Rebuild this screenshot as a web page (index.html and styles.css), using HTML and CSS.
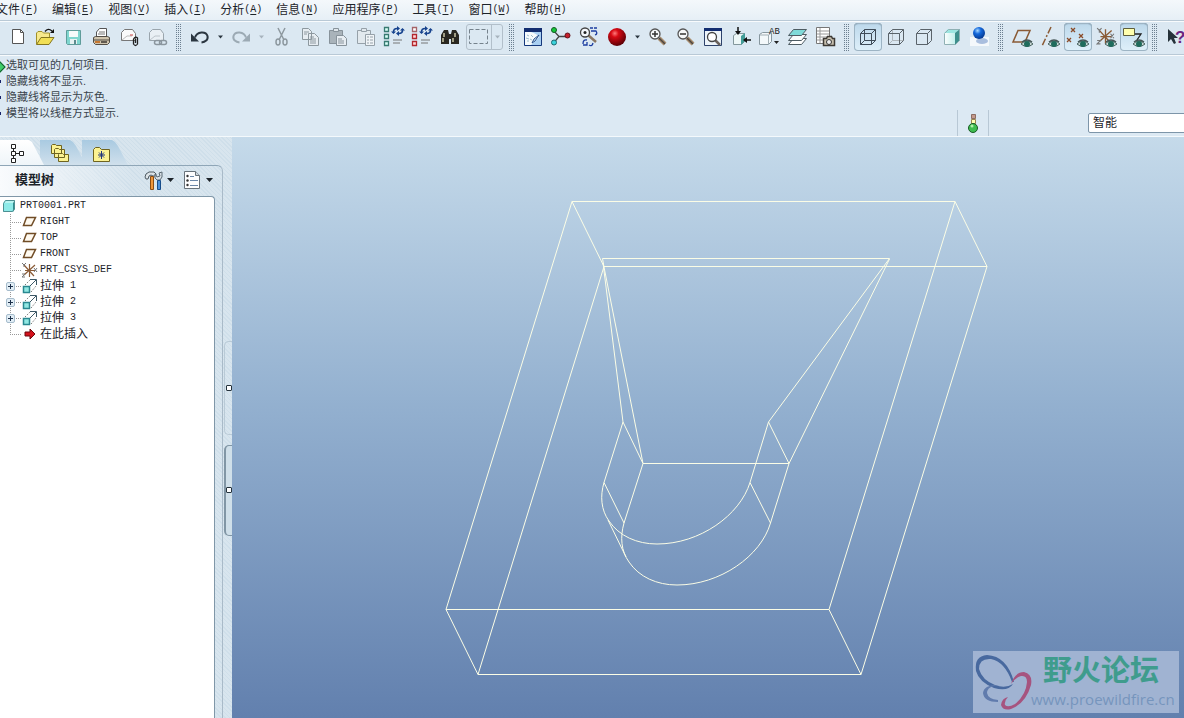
FILE: index.html
```html
<!DOCTYPE html>
<html lang="zh-CN">
<head>
<meta charset="utf-8">
<title>PRT0001</title>
<link rel="stylesheet" href="styles.css">
</head>
<body>
<svg class="defs" aria-hidden="true">
  <defs>
    <radialGradient id="red" cx=".38" cy=".3" r=".7"><stop offset="0" stop-color="#ff7a7a"/><stop offset=".3" stop-color="#d80a14"/><stop offset="1" stop-color="#5d0006"/></radialGradient>
    <radialGradient id="blue" cx=".38" cy=".3" r=".7"><stop offset="0" stop-color="#a8d8ff"/><stop offset=".4" stop-color="#1569dc"/><stop offset="1" stop-color="#063a92"/></radialGradient>
    <linearGradient id="teal" x1="0" x2="1"><stop offset="0" stop-color="#fff"/><stop offset="1" stop-color="#c4efec"/></linearGradient>
    <symbol id="caret" viewBox="0 0 7 4"><path d="M0 0h7L3.500 4z" fill="currentColor"/></symbol>
    <symbol id="eye" viewBox="0 0 12 9"><path d="M0 5Q6-1 12 5Q6 10 0 5z" fill="#c9d8d6" stroke="#4a6460"/><circle cx="6" cy="5" r="3" fill="#1f6b5c"/><path d="M1 3Q6-1 11 3" stroke="#455" stroke-width="1.500" fill="none"/></symbol>
    <symbol id="plane" viewBox="0 0 15 11"><path d="M4.500 1.500h9l-4 8h-8z" fill="#fffaf0" stroke="#704c26" stroke-width="1.500"/></symbol>
    <symbol id="csys" viewBox="0 0 17 16"><path d="M8.500 2v13M3 3l10 11M3 13L14 3M4 8.500h10" stroke="#8a5a35" stroke-width="1.200"/><path d="M1 1l2 2 2-2M3 3v2M13 6l3 4m0-4l-3 4M1 12h3l-3 3h3" stroke="#777" fill="none"/></symbol>
    <symbol id="extrude" viewBox="0 0 16 16"><path d="M1.500 8.500h6v6h-6z" fill="#92e8e3" stroke="#2a8890" stroke-width="1.500"/><path d="M3 7l6-6M9 14l5-6" stroke="#777" stroke-dasharray="1.500 1.500"/><path d="M8 1.500h6.500V7M8 8l6-6" fill="none" stroke="#3d5866"/></symbol>
    <symbol id="lens" viewBox="0 0 20 20"><path d="M11 11l6 6" stroke="#a68b6d" stroke-width="4"/><path d="M11 11l6 6" stroke="#4d4640" stroke-width="1.500"/><circle cx="7" cy="7" r="5" fill="#f6f9fb" stroke="#555" stroke-width="1.300"/></symbol>
    <symbol id="swap" viewBox="0 0 14 11"><path d="M2.500 7Q2 2 7 2.500M11.500 3Q12 8 7 7.500" fill="none" stroke="#17438e" stroke-width="1.600"/><path d="M6 0v5l3-2.500zM8 5v5L5 7.500zM0 5.500h5L2.500 8zM9 4.500h5L11.500 2z" fill="#17438e"/></symbol>
  </defs>
</svg>

<div class="app">
  <nav class="menubar" aria-label="主菜单">
    <button>文件<span>(<u>F</u>)</span></button>
    <button>编辑<span>(<u>E</u>)</span></button>
    <button>视图<span>(<u>V</u>)</span></button>
    <button>插入<span>(<u>I</u>)</span></button>
    <button>分析<span>(<u>A</u>)</span></button>
    <button>信息<span>(<u>N</u>)</span></button>
    <button>应用程序<span>(<u>P</u>)</span></button>
    <button>工具<span>(<u>T</u>)</span></button>
    <button>窗口<span>(<u>W</u>)</span></button>
    <button>帮助<span>(<u>H</u>)</span></button>
  </nav>

  <div class="toolbar" role="toolbar" aria-label="工具栏">
    <button class="tool" aria-label="新建"><svg viewBox="0 0 28 28"><path d="M8.500 6.500h8l3 3v11h-11z" fill="#fff" stroke="#555"/><path d="M16.500 6.500v3h3" fill="none" stroke="#555"/></svg></button>
    <button class="tool" aria-label="打开"><svg viewBox="0 0 28 28"><path d="M4.500 21V10l1.500-1.500h4l1.500 1.500h6v4" fill="#f7e98c" stroke="#a0902a"/><path d="M4.500 21.500L9 14.500h13l-5 7z" fill="#f1df55" stroke="#84761f"/><path d="M13 8.500Q16 4.500 20 8" fill="none" stroke="#111" stroke-width="1.300"/><path d="M22 6v4h-4z" fill="#111"/></svg></button>
    <button class="tool" aria-label="保存"><svg viewBox="0 0 28 28"><path d="M6.500 7.500h14v14h-13l-1-1z" fill="#7fd6cf" stroke="#5f9c9a"/><path d="M9 8h9v6H9z" fill="#f6fbfb"/><path d="M10 16h7v5h-7z" fill="#e6f2f2"/><path d="M14 17h2v4h-2z" fill="#5f8b8f"/></svg></button>
    <button class="tool" aria-label="打印"><svg viewBox="0 0 28 28"><path d="M8.500 14V9l3-3.500h7V14z" fill="#fff" stroke="#555"/><path d="M11 9h6M10 11h7" stroke="#777"/><path d="M5.500 14.500l2-1h12l2 1v5l-2 2h-12l-2-2z" fill="#cfc4ad" stroke="#524c44"/><path d="M6 17h15" stroke="#524c44"/><path d="M7 19h5" stroke="#c67730" stroke-width="2"/><path d="M13 19h6" stroke="#615a50" stroke-width="2"/></svg></button>
    <button class="tool" aria-label="发送附件"><svg viewBox="0 0 28 28"><path d="M5.500 17.500v-8l3-3h8l3 4v7z" fill="#fafafa" stroke="#777"/><path d="M6 17l5-4h5" fill="none" stroke="#bbb"/><path d="M14 12h3" stroke="#c44"/><path d="M17.500 16v5q2 3 4 0v-6q-2-2-4 1M19.500 16v4" fill="none" stroke="#222" stroke-width="1.300"/></svg></button>
    <button class="tool" aria-label="发送链接"><svg viewBox="0 0 28 28"><path d="M5.500 17.500v-8l3-3h8l3 4v7z" fill="#e9eff4" stroke="#9aa5ad"/><path d="M6 17l5-4h5" fill="none" stroke="#bcc4ca"/><rect x="10.500" y="17.500" width="7" height="4" rx="2" fill="none" stroke="#8b969e" stroke-width="1.500"/><rect x="15.500" y="17.500" width="7" height="4" rx="2" fill="none" stroke="#8b969e" stroke-width="1.500"/></svg></button>
    <span class="grip"></span>
    <button class="tool" aria-label="撤消"><svg viewBox="0 0 28 28"><path d="M9 14.500C11 8 20 8 21.500 13C22.500 17 19 19 15.500 19.500" fill="none" stroke="#2b3640" stroke-width="2"/><path d="M5 10.500v8h8z" fill="#2b3640"/></svg></button>
    <button class="drop" aria-label="撤消列表"><svg><use href="#caret"/></svg></button>
    <button class="tool" aria-label="重做"><svg viewBox="0 0 28 28"><path d="M19 14.500C17 8 8 8 6.500 13C5.500 17 9 19 12.500 19.500" fill="none" stroke="#9caab4" stroke-width="2"/><path d="M23 10.500v8h-8z" fill="#9caab4"/></svg></button>
    <button class="drop off" aria-label="重做列表"><svg><use href="#caret"/></svg></button>
    <button class="tool" aria-label="剪切"><svg viewBox="0 0 28 28" fill="none" stroke="#8d989f" stroke-width="1.500"><path d="M10 5l6 12M17 5l-6 12"/><ellipse cx="10" cy="19" rx="2" ry="3"/><ellipse cx="17" cy="19" rx="2" ry="3"/></svg></button>
    <button class="tool" aria-label="复制"><svg viewBox="0 0 28 28" fill="#e7edf2" stroke="#8d989f"><path d="M6.500 5.500h6l3 3v8h-9zM12.500 10.500h6l4 4v8h-10z"/><path d="M8 9h5M8 11h3M14 14h4M14 16h6M14 18h6M14 20h6"/></svg></button>
    <button class="tool" aria-label="粘贴"><svg viewBox="0 0 28 28" fill="#a9b3ba" stroke="#87929a"><path d="M5.500 7.500h13v13h-13z"/><path d="M9.500 5.500h5v3h-5z" fill="#dfe6eb"/><path d="M12.500 12.500h7l3 3v7h-10z" fill="#e7edf2"/><path d="M14 16h4M14 18h6M14 20h6"/></svg></button>
    <button class="tool" aria-label="选择性粘贴"><svg viewBox="0 0 28 28" fill="#e2e9ee" stroke="#96a1a9"><path d="M5.500 7.500h13v13h-13z"/><path d="M9.500 5.500h5v3h-5z"/><path d="M13.500 11.500h9v11h-9z" fill="#f0f4f7"/><path d="M15 14h2M18 14h3M15 17h2M18 17h3M15 20h2M18 20h3"/></svg></button>
    <button class="tool" aria-label="再生"><svg viewBox="0 0 28 28"><path d="M4.500 4.500h4v4h-4zM4.500 11.500h4v4h-4zM4.500 18.500h4v4h-4z" fill="#d9fff7" stroke="#387a72" stroke-width="1.300"/><path d="M13 17h9M13 20h7" stroke="#777"/><use href="#swap" x="11" y="3" width="14" height="11"/></svg></button>
    <button class="tool" aria-label="定制再生"><svg viewBox="0 0 28 28"><path d="M4.500 4.500h4v4h-4z" fill="#fff" stroke="#a56468" stroke-width="1.300"/><path d="M4.500 11.500h4v4h-4zM4.500 18.500h4v4h-4z" fill="#ffd7d7" stroke="#b3262c" stroke-width="1.300"/><path d="M13 17h9M13 20h7" stroke="#777"/><use href="#swap" x="11" y="3" width="14" height="11"/></svg></button>
    <button class="tool" aria-label="查找"><svg viewBox="0 0 28 28" fill="#29271f"><path d="M8 7h4l1 4v10H5v-9zM16 7h4l3 5v9h-8V11zM12 11h4v5h-4z"/><path d="M8 10v4M19 10v4M7 15v4M17 15v4" stroke="#c9c6a5" stroke-width="1.500"/></svg></button>
    <span class="picker">
      <button aria-label="框选"><svg viewBox="0 0 24 24"><path d="M2.500 4.500h18v14h-18z" fill="none" stroke="#75828c" stroke-dasharray="4 2"/></svg></button>
      <button class="drop off" aria-label="选择方式"><svg><use href="#caret"/></svg></button>
    </span>
    <span class="grip"></span>
    <button class="tool" aria-label="重画"><svg viewBox="0 0 28 28"><path d="M5.500 5.500h17v17h-17z" fill="#a9cff2" stroke="#15387c"/><path d="M5 5h18v4H5z" fill="#122d70"/><path d="M6 9h6q6 2 8 5l-8 8H6z" fill="#f5fafc"/><path d="M8 12l2 1M7 15l3 1M8 18h2M12 12l2 2M11 16l2 1" stroke="#9cbccc"/><path d="M20 12l-4 6-3 2 2-4z" fill="#dceefa" stroke="#26508e"/></svg></button>
    <button class="tool" aria-label="旋转中心"><svg viewBox="0 0 28 28"><path d="M7 8l5 5.500-5 6M12 13.500h8" fill="none" stroke="#444" stroke-width="1.300"/><circle cx="7" cy="7" r="2.500" fill="#16c83a" stroke="#145c24"/><circle cx="7" cy="19.500" r="2.500" fill="#3bd3dc" stroke="#1c6870"/><circle cx="20.500" cy="12.500" r="2.500" fill="#c5202c" stroke="#661018"/></svg></button>
    <button class="tool" aria-label="定向模式"><svg viewBox="0 0 28 28"><path d="M13 12l8 7" stroke="#8a7761" stroke-width="2.500"/><circle cx="10" cy="9.500" r="4.500" fill="#f5f8fb" stroke="#444" stroke-width="1.300"/><circle cx="10" cy="9.500" r="1.500" fill="#222"/><path d="M15 5h3m1 0h3M16 8h5q2 3-1 4M12 17q-4-1-4 4M8 22h4v-3M14 22q3 2 4-2" fill="none" stroke="#1c3da0" stroke-width="1.300"/></svg></button>
    <button class="tool" aria-label="外观库"><svg viewBox="0 0 28 28"><circle cx="14" cy="14" r="9" fill="url(#red)"/></svg></button>
    <button class="drop" aria-label="外观列表"><svg><use href="#caret"/></svg></button>
    <button class="tool" aria-label="放大"><svg viewBox="0 0 28 28"><use href="#lens" x="4" y="4" width="20" height="20"/><path d="M8 11h6M11 8v6" stroke="#333" stroke-width="1.500"/></svg></button>
    <button class="tool" aria-label="缩小"><svg viewBox="0 0 28 28"><use href="#lens" x="4" y="4" width="20" height="20"/><path d="M8 11h6" stroke="#333" stroke-width="1.500"/></svg></button>
    <button class="tool" aria-label="重新调整"><svg viewBox="0 0 28 28"><path d="M4.500 5.500h17v17h-17z" fill="#edf4fa" stroke="#2d426b"/><path d="M4 5h18v3H4z" fill="#122d70"/><path d="M15 17l5 5" stroke="#6b625b" stroke-width="2.500"/><circle cx="12" cy="14" r="4.500" fill="#fff" stroke="#444" stroke-width="1.300"/></svg></button>
    <button class="tool" aria-label="重定向"><svg viewBox="0 0 28 28"><path d="M5.500 12.500l3-2h8v8l-3 3h-8z" fill="#edf7f7" stroke="#83979c"/><path d="M13 13l4-3v8l-4 4z" fill="#429d98"/><path d="M10 4v6M16 17h7" stroke="#111" stroke-width="1.500"/><path d="M7 8h6l-3 4zM19 14v6l-4-3z" fill="#111"/></svg></button>
    <button class="tool" aria-label="已保存视图"><svg viewBox="0 0 28 28"><path d="M3.500 11.500l3-2h9v9l-3 3h-9z" fill="#f3f8fa" stroke="#87979f"/><path d="M4 12h8.500v9M12.500 12l3-2" fill="none" stroke="#a2afb5"/><path d="M18 18h5l-2.500 3z" fill="#222"/><text x="13" y="11" class="micro">AB</text></svg></button>
    <button class="tool" aria-label="层"><svg viewBox="0 0 28 28" stroke="#4e5c63"><path d="M9.500 15.500h13l-5 6h-13z" fill="#fff"/><path d="M9.500 11.500h13l-5 6h-13z" fill="#f8fbfb"/><path d="M9.500 6.500h13l-5 6h-13z" fill="#7fdad8"/></svg></button>
    <button class="tool" aria-label="视图管理器"><svg viewBox="0 0 28 28"><path d="M4.500 4.500h13v16h-13z" fill="#fff" stroke="#777"/><path d="M5 8h12M5 11h12M5 14h12M5 17h12M8 5v15" stroke="#999"/><path d="M11.500 15.500h3l1-2h4l1 2h2v7h-11z" fill="#c7bfae" stroke="#3d3934" stroke-width="1.500"/><circle cx="17" cy="19" r="2.500" fill="#eee" stroke="#333"/></svg></button>
    <span class="grip"></span>
    <button class="tool on" aria-label="线框"><svg viewBox="0 0 28 28" fill="none" stroke="#3f4c59"><path d="M6.500 10.500h11v11h-11zM10.500 6.500h11v11h-11zM6.500 10.500l4-4M17.500 10.500l4-4M6.500 21.500l4-4M17.500 21.500l4-4"/></svg></button>
    <button class="tool" aria-label="隐藏线"><svg viewBox="0 0 28 28" fill="none" stroke="#5a636a"><path d="M10.500 6.500v11h11M6.500 21.500l4-4" stroke="#b0b7bc"/><path d="M6.500 10.500h11v11h-11zM6.500 10.500l4-4h11v11l-4 4M17.500 10.500l4-4"/></svg></button>
    <button class="tool" aria-label="消隐"><svg viewBox="0 0 28 28" fill="none" stroke="#5a636a"><path d="M6.500 10.500h11v11h-11zM6.500 10.500l4-4h11v11l-4 4M17.500 10.500l4-4"/></svg></button>
    <button class="tool" aria-label="着色"><svg viewBox="0 0 28 28"><path d="M6 10l4-4h12l-5 4z" fill="#9ce6e1"/><path d="M6 10h11v12H6z" fill="url(#teal)"/><path d="M17 10l5-4v11l-5 5z" fill="#3d8f8c"/><path d="M6.500 21.500v-11l4-4h11v11l-4 4z" fill="none" stroke="#8fb0b4"/></svg></button>
    <button class="tool" aria-label="增强的真实感"><svg viewBox="0 0 28 28"><path d="M4 14h19v9H4z" fill="#f4f8fb"/><ellipse cx="16" cy="18" rx="6" ry="3" fill="#a9bede"/><circle cx="13" cy="10" r="6" fill="url(#blue)"/></svg></button>
    <span class="grip"></span>
    <button class="tool" aria-label="基准平面开关"><svg viewBox="0 0 28 28"><path d="M10 7.500h12L17 19H5z" fill="none" stroke="#8a5a35" stroke-width="1.500"/><use href="#eye" x="13" y="16" width="12" height="9"/></svg></button>
    <button class="tool" aria-label="基准轴开关"><svg viewBox="0 0 28 28"><path d="M15 4L6 23" stroke="#8a5a35" stroke-width="1.500" stroke-dasharray="7 2 2 2"/><use href="#eye" x="12" y="16" width="12" height="9"/></svg></button>
    <button class="tool on" aria-label="基准点开关"><svg viewBox="0 0 28 28"><path d="M7 5l4 4m0-4l-4 4M15 11l4 4m0-4l-4 4M3 15l4 4m0-4l-4 4" stroke="#8a4b28" stroke-width="1.300"/><use href="#eye" x="13" y="16" width="12" height="9"/></svg></button>
    <button class="tool" aria-label="坐标系开关"><svg viewBox="0 0 28 28"><use href="#csys" x="4" y="4" width="19" height="18"/><use href="#eye" x="13" y="16" width="12" height="9"/></svg></button>
    <button class="tool on" aria-label="注释开关"><svg viewBox="0 0 28 28"><path d="M3.500 5.500h11v7h-11z" fill="#ffffae" stroke="#5e5e3d"/><path d="M15 11h6l-4 6" fill="none" stroke="#222" stroke-width="1.300"/><use href="#eye" x="13" y="16" width="12" height="9"/></svg></button>
    <span class="grip"></span>
    <button class="tool" aria-label="上下文帮助"><svg viewBox="0 0 28 28"><path d="M6 6v13l3-3 3 5 2-1-2-5h4z" fill="#26323a"/><text x="13" y="20" class="help">?</text></svg></button>
  </div>

  <section class="messages" aria-label="消息">
    <ul>
      <li class="prompt">选取可见的几何项目.</li>
      <li>隐藏线将不显示.</li>
      <li>隐藏线将显示为灰色.</li>
      <li>模型将以线框方式显示.</li>
    </ul>
    <div class="status">
      <button class="light" aria-label="再生状态"><svg viewBox="0 0 12 20"><path d="M4.500 1.500h4v4h-4z" fill="#c49a8d" stroke="#8d6d63"/><path d="M4.500 6.500h4v4h-4z" fill="#ffffb4" stroke="#99864f"/><circle cx="6" cy="15" r="4.500" fill="#3fbd50" stroke="#175b24"/><circle cx="5" cy="13" r="1.500" fill="#aef0a8"/></svg></button>
      <select aria-label="选择过滤器"><option>智能</option></select>
    </div>
  </section>

  <main class="work">
    <aside class="side">
      <div class="tabs" role="tablist">
        <button class="tab active" role="tab" aria-selected="true" aria-label="模型树"><svg viewBox="0 0 22 22"><path d="M4.500 2.500h4v4h-4zM4.500 9.500h4v4h-4zM4.500 16.500h4v4h-4zM12.500 9.500h4v4h-4z" fill="#fff" stroke="#222"/><path d="M6.500 7v2M6.500 14v2M9 11.500h3" stroke="#222"/></svg></button>
        <button class="tab" role="tab" aria-label="文件夹浏览器"><svg viewBox="0 0 22 22" fill="#fbf292" stroke="#6f6420"><path d="M2.500 11.500v-8l1-1h3l1 1h5v8zM5.500 15.500v-8l1-1h3l1 1h5v8zM9.500 19.500v-7l1-1h3l1 1h5v7z"/></svg></button>
        <button class="tab" role="tab" aria-label="收藏夹"><svg viewBox="0 0 22 22"><path d="M2.500 19.500v-12l2-2h4l2 2h8v12z" fill="#fbf292" stroke="#6f6420"/><path d="M10.500 9v8M7 13h7M8 10.500l5 5M13 10.500l-5 5" stroke="#23367c"/></svg></button>
      </div>
      <div class="panel">
        <header class="panel-head">
          <h2>模型树</h2>
          <button class="head-tool" aria-label="设置"><svg class="glyph" viewBox="0 0 20 20"><path d="M1 7l1-3 3-2h5l2 2v2H9L7 5 5 6 4 9H2z" fill="#dce3e7" stroke="#4e5a62"/><path d="M6.500 6.500h3v13h-3z" fill="#ee963c" stroke="#8a4c12"/><path d="M11 4v4l2 2h3l2-3V2l-3 1 1 3-3 1z" fill="#d5dde3" stroke="#5b6a74"/><path d="M13.500 10.500h3v9h-3z" fill="#4a90dc" stroke="#164c8b"/></svg><svg class="caret"><use href="#caret"/></svg></button>
          <button class="head-tool" aria-label="显示"><svg class="glyph" viewBox="0 0 20 20"><path d="M1.500 1.500h11l4 4v13h-15z" fill="#fdfdfe" stroke="#68727a"/><path d="M12.500 1.500v4h4" fill="#cdd6dd" stroke="#68727a"/><circle cx="4.500" cy="6" r="1.200" fill="#333"/><circle cx="4.500" cy="10.500" r="1.200" fill="#333"/><circle cx="4.500" cy="15" r="1.200" fill="#333"/><path d="M7 6.500h4M7 10.500h8M7 15.500h8" stroke="#6b87a8"/></svg><svg class="caret"><use href="#caret"/></svg></button>
        </header>
        <div class="tree">
          <div class="root"><svg viewBox="0 0 14 14"><path d="M1 4l2-3h10l-2 3z" fill="#b8f4f1"/><path d="M1 4h10v9H1z" fill="#8deae8"/><path d="M11 4l2-3v9l-2 3z" fill="#2f8c8e"/><path d="M1.500 12.500v-8l2-3h9v8l-2 3z" fill="none" stroke="#4d8f92"/></svg><span class="en">PRT0001.PRT</span></div>
          <ul>
            <li><svg viewBox="0 0 17 16"><use href="#plane" x="1" y="2" width="15" height="11"/></svg><span class="en">RIGHT</span></li>
            <li><svg viewBox="0 0 17 16"><use href="#plane" x="1" y="2" width="15" height="11"/></svg><span class="en">TOP</span></li>
            <li><svg viewBox="0 0 17 16"><use href="#plane" x="1" y="2" width="15" height="11"/></svg><span class="en">FRONT</span></li>
            <li><svg viewBox="0 0 17 16"><use href="#csys" width="17" height="16"/></svg><span class="en">PRT_CSYS_DEF</span></li>
            <li><button class="plus" aria-label="展开"></button><svg viewBox="0 0 17 16"><use href="#extrude" x="1" width="16" height="16"/></svg>拉伸<span class="en num">1</span></li>
            <li><button class="plus" aria-label="展开"></button><svg viewBox="0 0 17 16"><use href="#extrude" x="1" width="16" height="16"/></svg>拉伸<span class="en num">2</span></li>
            <li><button class="plus" aria-label="展开"></button><svg viewBox="0 0 17 16"><use href="#extrude" x="1" width="16" height="16"/></svg>拉伸<span class="en num">3</span></li>
            <li><svg viewBox="0 0 17 16"><path d="M4 6h5V3l5 5-5 5v-3H4z" fill="#d5121c" stroke="#6d070c"/></svg>在此插入</li>
          </ul>
        </div>
      </div>
      <div class="splitter">
        <button class="handle flat" aria-label="折叠浏览器"></button>
        <button class="handle" aria-label="折叠导航器"></button>
      </div>
    </aside>

    <section class="canvas" aria-label="图形窗口">
      <svg class="wire" viewBox="232 137 952 581" preserveAspectRatio="xMinYMin slice" fill="none" stroke="#fbfde6">
        <path d="M572 201.500H955L987 266.500H604L572 201.500L446 609.500H829L861 674.500H478L446 609.500M604 266.500L478 674.500M955 201.500L829 609.500M987 266.500L861 674.500"/>
        <path d="M604 267L602.500 258.500H889.500L768.500 422L789 463.500H643L623 422L603 263M604 267L643 463.500M889.500 259L789 463.500"/>
        <path d="M623 422L604 482.500L624 523L643 463.500M768.500 422L750 482.500L770.500 523L789 463.500M608 520L626 557"/>
        <path d="M604 482.500C600 496 601 510 609 521C619 536 637 544 657 544C700 544 740 515 750 482.500"/>
        <path d="M624 523C620 537 621 551 629 562C639 577 657 585 677 585C720 585 761 556 770.500 523"/>
      </svg>
      <div class="watermark">
        <svg viewBox="0 0 60 62"><path d="M3 20Q1 5 14 4Q34 5 41 31L39 31Q32 11 18 8Q6 7 6 18Q9 29 22 34Q32 38 40 33Q35 41 21 37Q6 31 3 20z" fill="#48699f"/><path d="M27 34Q14 35 14 42Q15 48 25 49V51Q11 51 10 42Q11 33 27 34z" fill="#607bad"/><path d="M38 33Q42 21 51 21Q60 23 58 34Q53 52 38 58Q30 60 28 54Q29 47 35 46Q31 50 32 54Q35 57 42 53Q53 44 54 31Q54 24 48 25Q42 27 38 33z" fill="#a6547f"/></svg>
        <div><strong>野火论坛</strong><a href="#">www.proewildfire.cn</a></div>
      </div>
    </section>
  </main>
</div>
</body>
</html>
```
FILE: styles.css
```css
* { box-sizing: border-box; }
html, body { height: 100%; }
body {
  margin: 0;
  overflow: hidden;
  color: #1c2329;
  background: #dce9f3;
  font: 12px/16px "Liberation Sans", "Noto Sans CJK SC", sans-serif;
}
button {
  padding: 0;
  border: 0;
  background: none;
  color: inherit;
  font: inherit;
}
ul { margin: 0; padding: 0; list-style: none; }
svg { display: block; flex: none; }
.defs { position: absolute; width: 0; height: 0; }
.app { display: flex; flex-direction: column; height: 100%; }

.menubar {
  display: flex;
  flex: none;
  gap: 14px;
  height: 21px;
  margin-left: -4px;
  border-bottom: 1px solid #b9c9d6;
  background: linear-gradient(#f4f8fb, #e6eff6);
}
.menubar button { display: flex; align-items: center; white-space: nowrap; }
.menubar span, .en { font-family: "Liberation Mono", monospace; font-size: 10px; }
.menubar u { text-underline-offset: 2px; }

.toolbar {
  display: flex;
  flex: none;
  align-items: center;
  height: 34px;
  padding: 0 0 2px 4px;
  overflow: hidden;
  border-top: 1px solid #f8fbfd;
  border-bottom: 1px solid #b9c9d6;
  background: #dbe8f2;
}
.tool { flex: none; width: 28px; height: 28px; }
.tool svg { width: 28px; height: 28px; }
.tool.on {
  border-radius: 4px;
  background: linear-gradient(#bcd8eb, #dff0fa);
  box-shadow: inset 0 0 0 1px #9db4c4, inset 0 1px 1px #6f899b;
}
.drop { display: flex; flex: none; align-items: center; justify-content: center; width: 13px; height: 28px; color: #2b3640; }
.drop svg { width: 5px; height: 4px; }
.drop.off { color: #a7b3bd; }
.grip {
  flex: none;
  width: 5px;
  height: 28px;
  margin: 0 5px 0 4px;
  background:
    repeating-linear-gradient(#dbe8f2 0 1px, transparent 1px 2px),
    repeating-linear-gradient(90deg, #6c7f90 0 1px, transparent 1px 2px);
}
.picker { display: flex; flex: none; width: 37px; height: 26px; margin: 0 2px; border: 1px solid #b2bfca; border-radius: 3px; }
.picker svg { width: 24px; height: 24px; }
.picker .drop { width: 11px; height: 24px; border-left: 1px solid #b2bfca; }
.picker .drop svg { width: 5px; height: 4px; }
.micro { font: 9px "Liberation Mono", monospace; fill: #222; }
.help { font: bold 17px "Liberation Sans", sans-serif; fill: #6d2380; }

.messages {
  display: flex;
  flex: none;
  justify-content: space-between;
  height: 82px;
  border-top: 1px solid #f8fbfd;
  border-bottom: 1px solid #f4f9fc;
}
.messages ul { padding-top: 1px; font-size: 11px; color: #39434b; }
.messages li { position: relative; padding-left: 6px; white-space: nowrap; }
.messages li::before {
  content: "";
  position: absolute;
  top: 7px;
  left: -1px;
  width: 2px;
  height: 3px;
  background: #16226a;
}
.messages .prompt::before {
  top: 6px;
  left: -4px;
  width: 6px;
  height: 6px;
  border: 1px solid #125c2d;
  background: #3fce69;
  transform: rotate(45deg);
}
.status { display: flex; align-items: flex-end; gap: 99px; }
.light { display: flex; align-items: center; justify-content: center; width: 32px; height: 26px; border: solid #b8c8d5; border-width: 0 1px; }
.light svg { width: 12px; height: 20px; }
.status select {
  width: 100px;
  height: 20px;
  margin: 0 -4px 3px 0;
  padding: 0 4px;
  border: 1px solid #7d95a9;
  border-radius: 2px;
  background: #fff;
  color: inherit;
  font: inherit;
  appearance: none;
}

.work { display: flex; flex: 1; min-height: 0; }
.side {
  display: grid;
  flex: none;
  grid-template: 28px 1fr / 223px 9px;
  background: repeating-linear-gradient(45deg, #cfdfea 0 1px, #d8e5ee 1px 3px);
}
.tabs { display: flex; grid-column: 1 / -1; align-items: flex-end; }
.tab {
  width: 46px;
  height: 25px;
  margin-right: -4px;
  padding: 1px 0 1px 9px;
  background: linear-gradient(#a9cae1, #d0e0ec);
  clip-path: polygon(0 0, 30px 0, 33px 2px, 36px 6px, 46px 100%, 0 100%);
}
.tab.active {
  z-index: 1;
  width: 44px;
  padding-left: 7px;
  background: linear-gradient(#fff, #eff5f9);
  clip-path: polygon(0 0, 29px 0, 32px 2px, 44px 100%, 0 100%);
}
.tab svg { width: 22px; height: 22px; }
.panel {
  display: flex;
  flex-direction: column;
  min-height: 0;
  border-top: 1px solid #8fa6b7;
  border-right: 1px solid #a9bac8;
  border-radius: 0 6px 0 0;
}
.panel-head {
  display: flex;
  flex: none;
  align-items: center;
  gap: 9px;
  height: 30px;
  padding: 0 9px 2px 15px;
  background: linear-gradient(90deg, #f9fbfd, transparent 60%);
}
.panel-head h2 { flex: 1; margin: 0; font-size: 13px; }
.head-tool { display: flex; align-items: center; gap: 3px; }
.glyph { width: 20px; height: 20px; }
.caret { width: 7px; height: 4px; }
.tree {
  flex: 1;
  margin-right: 7px;
  padding-top: 1px;
  border: solid #8097a8;
  border-width: 1px 1px 0 0;
  border-radius: 0 4px 0 0;
  background: #fff;
}
.root { display: flex; align-items: center; gap: 4px; height: 16px; padding-left: 2px; }
.root svg { width: 14px; height: 14px; }
.tree ul { background: linear-gradient(#999 50%, transparent 50%) 10px 0 / 1px 2px repeat-y; }
.tree li {
  position: relative;
  display: flex;
  align-items: center;
  gap: 2px;
  height: 16px;
  padding-left: 21px;
  white-space: nowrap;
}
.tree li::before {
  content: "";
  position: absolute;
  top: 8px;
  left: 10px;
  width: 11px;
  height: 1px;
  background: repeating-linear-gradient(90deg, #999 0 1px, transparent 1px 2px);
}
.tree li:last-child::after {
  content: "";
  position: absolute;
  top: 9px;
  left: 10px;
  width: 1px;
  height: 7px;
  background: #fff;
}
.tree li svg { width: 17px; height: 16px; }
.num { margin-left: 4px; }
.plus {
  position: absolute;
  z-index: 1;
  top: 4px;
  left: 6px;
  width: 9px;
  height: 9px;
  border: 1px solid #a6bccc;
  border-radius: 2px;
  background:
    linear-gradient(#1c2f48, #1c2f48) center / 5px 1px no-repeat,
    linear-gradient(#1c2f48, #1c2f48) center / 1px 5px no-repeat,
    #e1edf5;
}
.splitter { display: flex; flex-direction: column; justify-content: center; gap: 10px; margin-bottom: 7px; padding-left: 1px; }
.handle {
  display: flex;
  align-items: center;
  justify-content: center;
  height: 91px;
  border: 1px solid #8196a5;
  border-width: 1px 0 1px 2px;
  border-radius: 5px 0 0 5px;
  background: #cfdfe9;
}
.handle::before { content: ""; width: 4px; height: 4px; border: 1px solid #24323c; border-radius: 1px; background: #fff; }
.handle.flat { height: 94px; border-color: #b9cad6; border-left-width: 1px; background: none; }

.canvas {
  position: relative;
  flex: 1;
  min-width: 0;
  overflow: hidden;
  background: linear-gradient(#c5daea, #94b1d0 45%, #6280ae);
}
.wire { width: 100%; height: 100%; }
.watermark {
  position: absolute;
  right: 5px;
  bottom: 5px;
  display: flex;
  width: 206px;
  height: 62px;
  background: #a0b3d2;
}
.watermark svg { width: 60px; height: 62px; }
.watermark div { display: flex; flex-direction: column; margin-left: -2px; }
.watermark strong { padding: 2px 0 0 12px; color: #3f9c8d; font-size: 29px; line-height: 36px; }
.watermark a { color: #7695bd; font: 15px/20px "Open Sans", sans-serif; text-decoration: none; }
```
